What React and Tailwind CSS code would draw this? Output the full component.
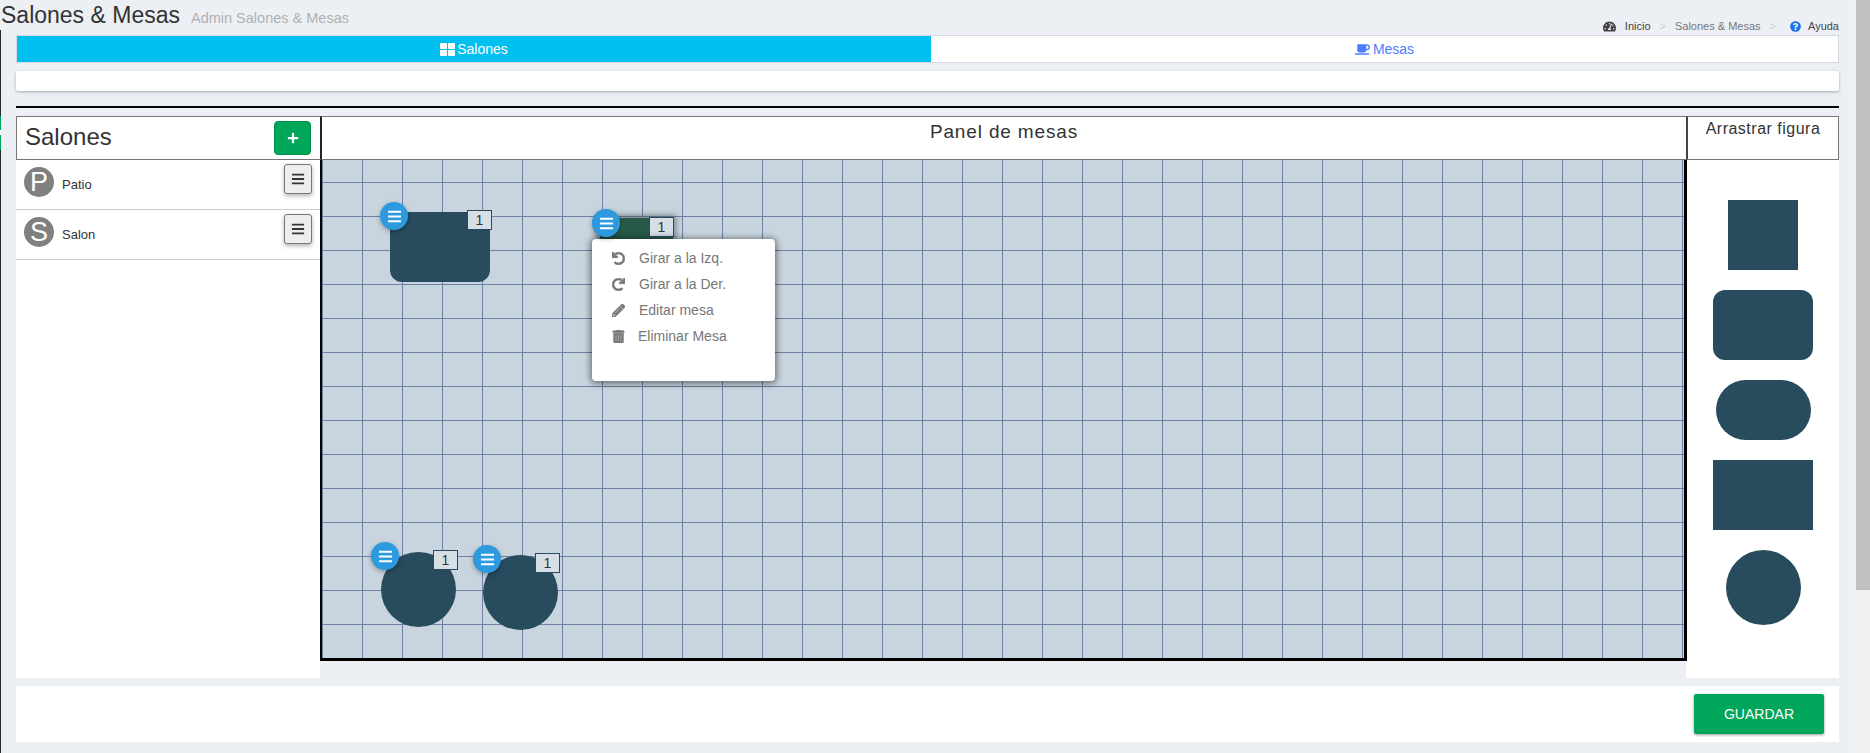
import {
  FaBars,
  FaCoffee,
  FaPencilAlt,
  FaPlus,
  FaQuestionCircle,
  FaRedo,
  FaTachometerAlt,
  FaThLarge,
  FaTrashAlt,
  FaUndo,
} from "react-icons/fa";

const salones = [
  { letter: "P", name: "Patio" },
  { letter: "S", name: "Salon" },
];

const menuItems = [
  { icon: FaUndo, label: "Girar a la Izq.", gap: "w-[27px]" },
  { icon: FaRedo, label: "Girar a la Der.", gap: "w-[27px]" },
  { icon: FaPencilAlt, label: "Editar mesa", gap: "w-[27px]" },
  { icon: FaTrashAlt, label: "Eliminar Mesa", gap: "w-[26px]" },
];

const mesas = [
  {
    shape: "left-[68px] top-[52px] w-[100px] h-[70px] rounded-xl bg-[#284b5e]",
    button: "left-[58px] top-[42px]",
    badge: "left-[145px] top-[50px]",
  },
  {
    shape:
      "left-[278px] top-[58px] w-[73px] h-[40px] bg-[#285a4a] shadow-[0_0_6px_3px_rgba(60,70,80,0.55)]",
    button: "left-[270px] top-[49px]",
    badge: "left-[327px] top-[57px]",
  },
  {
    shape: "left-[59px] top-[392px] w-[75px] h-[75px] rounded-full bg-[#284b5e]",
    button: "left-[49px] top-[382px]",
    badge: "left-[111px] top-[390px]",
  },
  {
    shape: "left-[161px] top-[395px] w-[75px] h-[75px] rounded-full bg-[#284b5e]",
    button: "left-[151px] top-[385px]",
    badge: "left-[213px] top-[393px]",
  },
];

function Mesa({ mesa }) {
  return (
    <>
      <div className={`absolute ${mesa.shape}`} />
      <div
        className={`absolute ${mesa.badge} w-[25px] h-[20px] flex items-center justify-center border border-[#284b5e] bg-[#d6dfe6] text-sm text-[#333]`}
      >
        1
      </div>
      <button
        className={`absolute ${mesa.button} z-20 w-[28px] h-[28px] rounded-full bg-[#2d9ae0] flex items-center justify-center text-white shadow-[0_2px_5px_rgba(0,0,0,0.3)]`}
      >
        <FaBars className="w-[15px] h-[15px]" />
      </button>
    </>
  );
}

function MesaMenu() {
  return (
    <div className="absolute left-[270px] top-[79px] z-10 w-[183px] h-[142px] pt-[6px] pl-[20px] bg-white rounded-[4px] shadow-[0_1px_6px_2px_rgba(0,0,0,0.45)]">
      {menuItems.map((item) => {
        const Icon = item.icon;
        return (
          <div
            key={item.label}
            className="h-[26px] flex items-center text-sm text-[#777]"
          >
            <span className={`${item.gap} flex`}>
              <Icon className="w-[13px] h-[13px] stroke-[24]" />
            </span>
            {item.label}
          </div>
        );
      })}
    </div>
  );
}

export default function App() {
  return (
    <div className="flex h-[753px] overflow-hidden bg-[#ecf0f5] font-['Liberation_Sans',Arial,sans-serif] text-[#333]">
      {/* sidebar edge left visible behind the page */}
      <div className="w-px shrink-0 flex flex-col pt-[30px]">
        <div className="h-[86px] bg-[#222d32]" />
        <div className="h-[14px] bg-[#00a65a]" />
        <div className="h-[5px] bg-white" />
        <div className="h-[15px] bg-[#00a65a]" />
        <div className="flex-1 bg-[#222d32]" />
      </div>

      <div className="flex-1 min-w-0 pl-[15px] pr-[15px]">
        <div className="-ml-[15px] h-[35px] flex justify-between">
          <div className="flex items-baseline h-[30px]">
            <h1 className="text-[23px] leading-[30px]">Salones &amp; Mesas</h1>
            <span className="ml-[11px] text-[14.5px] text-[#b0b0b0]">
              Admin Salones &amp; Mesas
            </span>
          </div>
          <div className="flex items-center h-[18px] mt-[17px] text-[11px] text-[#444]">
            <FaTachometerAlt className="w-[13px] h-[13px]" />
            <span className="ml-[9px]">Inicio</span>
            <span className="mx-[9px] text-[#ccc]">&gt;</span>
            <span className="text-[#777]">Salones &amp; Mesas</span>
            <span className="mx-[9px] text-[#ccc]">&gt;</span>
            <FaQuestionCircle className="w-[11px] h-[11px] text-[#1a73e8] ml-[5px]" />
            <span className="ml-[7px]">Ayuda</span>
          </div>
        </div>

        {/* tabs */}
        <div className="h-[28px] flex border border-[#d5d9e2] bg-white text-sm">
          <div className="w-[914px] bg-[#00c0ef] text-white flex items-center justify-center gap-[2px]">
            <FaThLarge className="w-[15px] h-[15px]" />
            Salones
          </div>
          <div className="flex-1 text-[#4a7dff] flex items-center justify-center gap-[3px]">
            <FaCoffee className="w-[15px] h-[15px]" />
            Mesas
          </div>
        </div>

        <div className="mt-[8px] h-[20px] bg-white rounded-[2px] shadow-[0_1px_3px_rgba(0,0,0,0.3)]" />
        <div className="mt-[15px] h-[2px] bg-black" />

        <div className="mt-[8px] h-[562px] flex">
          {/* salones */}
          <div className="w-[304px] shrink-0 bg-white">
            <div className="h-[44px] flex items-center justify-between border border-[#777] border-r-0 pl-[8px] pr-[9px]">
              <span className="text-2xl -mt-[2px]">Salones</span>
              <button className="w-[37px] h-[34px] flex items-center justify-center rounded-[4px] bg-[#00a65a] border border-[#008d4c] text-white">
                <FaPlus className="w-[12px] h-[12px]" />
              </button>
            </div>
            {salones.map((salon) => (
              <div
                key={salon.name}
                className="h-[50px] flex items-start border-b border-[#ccc] pl-[8px] pr-[8px]"
              >
                <div className="mt-[7px] w-[30px] h-[30px] rounded-full bg-[#808080] text-white text-[27px] leading-[30px] flex items-center justify-center">
                  {salon.letter}
                </div>
                <span className="ml-[8px] mt-[17px] text-[13px] leading-[16px] flex-1">
                  {salon.name}
                </span>
                <button className="mt-[4px] w-[28px] h-[30px] flex items-center justify-center rounded-[3px] border border-[#777] bg-[#eee] text-[#333] shadow-[0_2px_4px_rgba(0,0,0,0.3)]">
                  <FaBars className="w-[14px] h-[14px]" />
                </button>
              </div>
            ))}
          </div>

          {/* panel de mesas */}
          <div className="w-[1366px] shrink-0">
            <div className="h-[44px] bg-white border-y border-[#777] border-l-2 border-l-[#222] text-center text-[19px] tracking-[0.85px] leading-[30px]">
              Panel de mesas
            </div>
            <div className="relative z-10 w-[1367px] h-[501px] border-l-2 border-r-[3px] border-b-[3px] border-black bg-[#c9d5de] bg-[image:linear-gradient(to_right,#6e82a5_1px,transparent_1px),linear-gradient(to_bottom,#6e82a5_1px,transparent_1px)] bg-size-[40px_34px] bg-position-[0_22px]">
              {mesas.map((mesa) => (
                <Mesa key={mesa.button} mesa={mesa} />
              ))}
              <MesaMenu />
            </div>
          </div>

          {/* figuras */}
          <div className="flex-1 min-w-0 bg-white">
            <div className="h-[44px] border border-[#777] border-l-2 border-l-[#444] text-center text-[16px] tracking-[0.5px] leading-[24px]">
              Arrastrar figura
            </div>
            <div className="flex flex-col items-center gap-5 pt-[40px] pl-px">
              <div className="w-[70px] h-[70px] bg-[#284b5e]" />
              <div className="w-[100px] h-[70px] rounded-xl bg-[#284b5e]" />
              <div className="w-[95px] h-[60px] rounded-[30px] bg-[#284b5e]" />
              <div className="w-[100px] h-[70px] bg-[#284b5e]" />
              <div className="w-[75px] h-[75px] rounded-full bg-[#284b5e]" />
            </div>
          </div>
        </div>

        <div className="mt-[8px] h-[56px] bg-white flex justify-end items-center pr-[15px]">
          <button className="w-[130px] h-[40px] rounded-[2px] bg-[#00a65a] text-white text-sm shadow-[0_1px_3px_rgba(0,0,0,0.4)]">
            GUARDAR
          </button>
        </div>
      </div>

      {/* scrollbar */}
      <div className="w-[16px] shrink-0 bg-[#f1f1f1] pl-[2px]">
        <div className="h-[590px] bg-[#c1c1c1]" />
      </div>
    </div>
  );
}
